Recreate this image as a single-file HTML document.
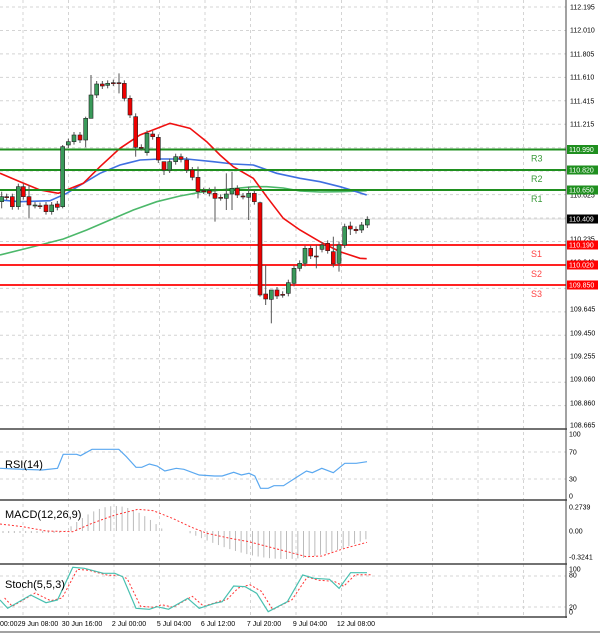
<!DOCTYPE html>
<html><head><meta charset="utf-8"><style>
body{margin:0;background:#fff;font-family:"Liberation Sans",sans-serif}
svg{display:block}
</style></head><body>
<svg id="s" width="600" height="634" xmlns="http://www.w3.org/2000/svg" font-family="Liberation Sans, sans-serif">
<rect width="600" height="634" fill="#fff"/>
<g id="grid"></g>
<g id="main"></g>
<g id="ind"></g>
<g id="ax" font-size="7" fill="#000"></g>
</svg>
<script>
const NS="http://www.w3.org/2000/svg";
function el(p,t,a,txt){const e=document.createElementNS(NS,t);for(const k in a)e.setAttribute(k,a[k]);if(txt!=null)e.textContent=txt;document.getElementById(p).appendChild(e);return e;}
function pl(p,pts,a){a.points=pts.map(q=>q[0].toFixed(1)+","+q[1].toFixed(1)).join(" ");a.fill="none";return el(p,"polyline",a);}
const PW=566;
for(let x=23;x<PW;x+=45.5){el("grid","line",{x1:x,x2:x,y1:0,y2:617,stroke:"#d4d4d4","stroke-dasharray":"3,3","stroke-width":1});}
const lbl=[[7,"112.195"],[30,"112.010"],[54,"111.805"],[77,"111.610"],[101,"111.415"],[124,"111.215"],[195,"110.625"],[239,"110.235"],[262,"110.040"],[286,"109.845"],[309,"109.645"],[333,"109.450"],[356,"109.255"],[379,"109.060"],[403,"108.860"],[425,"108.665"]];
for(let y=7;y<429;y+=23.45){el("grid","line",{x1:0,x2:PW,y1:y,y2:y,stroke:"#d4d4d4","stroke-dasharray":"3,3"});}
[452,479].forEach(y=>el("grid","line",{x1:0,x2:PW,y1:y,y2:y,stroke:"#d4d4d4","stroke-dasharray":"3,3"}));
[576,607].forEach(y=>el("grid","line",{x1:0,x2:PW,y1:y,y2:y,stroke:"#d4d4d4","stroke-dasharray":"3,3"}));
el("main","line",{x1:0,x2:PW,y1:219,y2:219,stroke:"#ddd"});
const lv=[[149.5,"#1f8f1f","R3","110.990"],[170,"#1f8f1f","R2","110.820"],[190,"#1f8f1f","R1","110.650"],[245,"#f22","S1","110.190"],[265,"#f22","S2","110.020"],[285,"#f22","S3","109.850"]];
const Z=(a)=>a.map(q=>[q[0]/3,q[1]/3+60]);
pl("main",Z([[0,585],[60,570],[120,555],[190,537],[260,510],[330,480],[400,450],[470,425],[540,408],[600,397],[680,388],[760,380],[800,380],[850,384],[900,393],[960,396],[1020,395],[1100,392]]),{stroke:"#4cb86a","stroke-width":1.6});
pl("main",Z([[0,420],[60,425],[150,422],[200,400],[250,370],[300,340],[360,315],[420,300],[480,297],[560,297],[640,305],[700,312],[760,315],[830,340],[900,355],[960,365],[1020,380],[1060,392],[1100,405]]),{stroke:"#3f6fe0","stroke-width":1.6});
pl("main",Z([[0,340],[60,365],[120,390],[175,400],[250,370],[300,320],[360,265],[420,225],[510,190],[570,205],[620,245],[660,285],[700,320],[760,355],[800,410],[850,475],[900,510],[960,545],[1020,575],[1080,595],[1100,596]]),{stroke:"#f01010","stroke-width":1.6});
lv.forEach(l=>{el("main","line",{x1:0,x2:PW,y1:l[0],y2:l[0],stroke:l[1],"stroke-width":2});});
const C=[[5,425,410],[20,410,411],[37,410,440],[55,440,380],[70,380,410],[87,410,435],[105,436,435],[120,437,438],[138,435,455],[155,455,435],[172,432,442],[188,440,260],[205,255,245],[222,245,225],[240,225,240],[257,240,175],[273,175,105],[290,105,72],[307,72,78],[323,76,70],[340,68,69],[357,68,69],[373,70,115],[390,115,165],[407,170,262],[424,262,263],[441,278,220],[458,222,230],[475,232,300],[492,305,330],[509,330,305],[527,305,290],[543,290,298],[560,300,330],[577,330,352],[594,352,395],[611,392,393],[628,392,400],[645,400,415],[662,412,413],[679,415,402],[696,402,385],[712,385,405],[729,408,409],[746,412,400],[763,400,425],[780,428,705],[797,702,717],[814,718,690],[831,690,708],[848,703,704],[865,700,668],[882,670,625],[899,625,610],[915,610,565],[932,565,588],[949,588,589],[966,568,555],[983,550,572],[1000,575,612],[1017,610,555],[1034,555,500],[1051,498,507],[1068,508,512],[1085,510,495],[1102,495,478]];
const big={0:[395,445],5:[375,475],11:[255,445],15:[170,262],16:[45,175],21:[40,100],24:[160,290],29:[305,345],35:[320,415],38:[380,485],40:[340,450],41:[335,450],44:[380,480],46:[425,710],47:[615,735],48:[690,790],56:[555,625],59:[530,622],60:[545,635],62:[485,525]};
C.forEach((c,i)=>{const x=c[0]/3,o=c[1]/3+60,cl=c[2]/3+60;const t=Math.min(o,cl),b=Math.max(o,cl);let hi=t-3,lo=b+3;if(big[i]){hi=big[i][0]/3+60;lo=big[i][1]/3+60;}
el("main","line",{x1:x,x2:x,y1:hi,y2:lo,stroke:"#555","stroke-width":1});
const up=cl<o;el("main","rect",{x:x-2,y:t,width:4,height:Math.max(b-t,1),fill:up?"#3a9a5a":"#e00",stroke:"#222","stroke-width":0.6});});
lv.forEach(l=>{el("main","text",{x:531,y:l[0]+12,"font-size":9,fill:l[1]=="#f22"?"#f44":"#3a9a3a"},l[2]);});
[429,500,564,617].forEach(y=>el("ind","line",{x1:0,x2:PW+1,y1:y,y2:y,stroke:"#444","stroke-width":1.5}));
el("ind","line",{x1:566,x2:566,y1:0,y2:618,stroke:"#444","stroke-width":1});
el("ind","line",{x1:0,x2:600,y1:632,y2:632,stroke:"#444","stroke-width":1});
const H=(a,oy)=>a.map(q=>[q[0]/2.61,q[1]/3+oy]);
pl("ind",H([[0,145],[40,147],[110,150],[150,145],[165,103],[200,103],[210,107],[240,88],[310,88],[330,110],[355,142],[370,142],[390,132],[410,138],[430,153],[460,145],[480,148],[520,165],[560,168],[580,168],[610,157],[630,165],[650,160],[665,168],[680,205],[700,205],[715,197],[740,197],[770,175],[800,153],[815,158],[840,145],[870,158],[900,130],[930,130],[958,125]],420),{stroke:"#5aa8f0","stroke-width":1.2});
el("ind","text",{x:5,y:468,"font-size":11},"RSI(14)");
for(let i=0;i<65;i++){const x=3+i*5.67;let v;
 if(x<65)v=-2; else if(x<165)v=25*Math.sin(Math.PI*(x-65)/100); else if(x<190)v=0; else v=-28*Math.sin(Math.PI*(x-185)/200);
 el("ind","line",{x1:x,x2:x,y1:531,y2:531-v,stroke:"#bbb","stroke-width":1});}
pl("ind",H([[0,312],[60,320],[120,333],[190,335],[240,310],[300,285],[360,268],[400,272],[450,295],[500,322],[540,340],[600,355],[650,365],[700,380],[750,395],[800,410],[840,408],[900,385],[958,367]],420),{stroke:"#f33","stroke-width":1,"stroke-dasharray":"2,2"});
el("ind","text",{x:5,y:518,"font-size":11},"MACD(12,26,9)");
const st=[[0,540],[20,565],[80,525],[120,548],[150,540],[190,442],[220,445],[270,460],[300,460],[320,470],[355,565],[390,568],[410,560],[440,568],[490,535],[520,565],[560,550],[580,545],[610,498],[640,500],[670,520],[700,575],[750,545],[790,465],[820,475],[860,478],[885,505],[915,458],[958,458]];
pl("ind",H(st.map(q=>[q[0]+12,Math.min(q[1]+(q[1]<500?6:-6),570)]),420),{stroke:"#f33","stroke-width":1,"stroke-dasharray":"2,2"});
pl("ind",H(st,420),{stroke:"#48c0b0","stroke-width":1.2});
el("ind","text",{x:5,y:588,"font-size":11},"Stoch(5,5,3)");
lbl.forEach(l=>el("ax","text",{x:570,y:l[0]+2.5},l[1]));
lv.forEach(l=>{el("ax","rect",{x:567,y:l[0]-4.5,width:31,height:9,fill:l[1]=="#f22"?"#f00":"#1f8f1f"});el("ax","text",{x:569,y:l[0]+2.5,fill:"#fff"},l[3]);});
el("ax","rect",{x:567,y:214.5,width:31,height:9,fill:"#000"});el("ax","text",{x:569,y:221.5,fill:"#fff"},"110.409");
[[434,"100"],[452,"70"],[479,"30"],[496,"0"],[507,"0.2739"],[531,"0.00"],[557,"-0.3241"],[569,"100"],[575,"80"],[607,"20"],[612,"0"]].forEach(l=>el("ax","text",{x:569,y:l[0]+2.5},l[1]));
[[0,"00:00"],[38,"29 Jun 08:00"],[82,"30 Jun 16:00"],[129,"2 Jul 00:00"],[174,"5 Jul 04:00"],[218,"6 Jul 12:00"],[264,"7 Jul 20:00"],[310,"9 Jul 04:00"],[356,"12 Jul 08:00"]].forEach((d,i)=>el("ax","text",{x:d[0],y:626,"text-anchor":i?"middle":"start"},d[1]));
</script>
</body></html>
